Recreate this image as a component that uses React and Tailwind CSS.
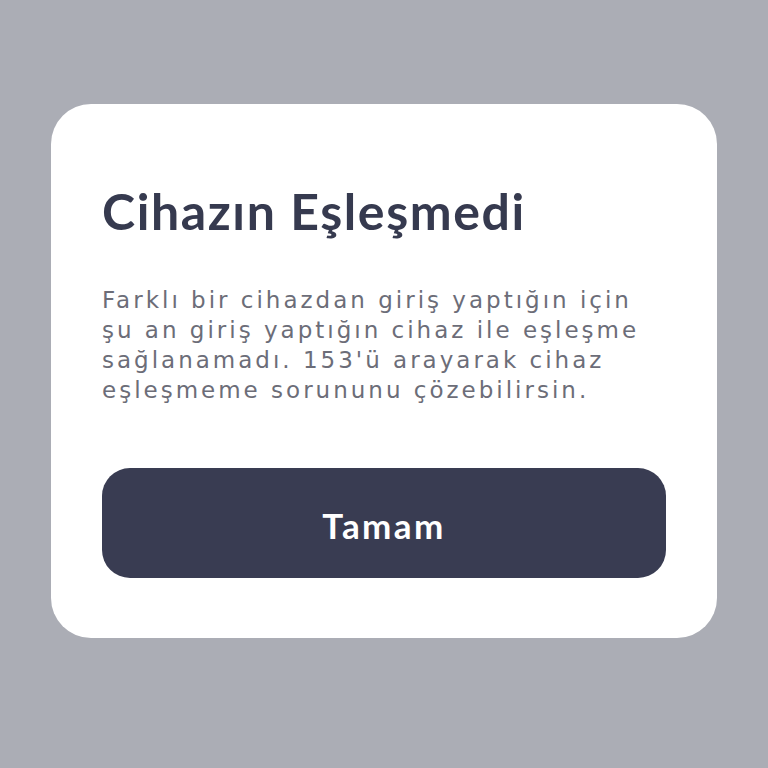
export default function App() {
  return (
    <div className="w-[768px] h-[768px] bg-[#abadb5] flex items-start justify-center pt-[104px]" style={{ fontFamily: '"Lato", "Noto Sans", sans-serif' }}>
      <div className="w-[666px] h-[534px] bg-white rounded-[40px] px-[51px] pt-[79px]">
        <h1 className="text-[50px] leading-[56px] font-bold text-[#363a4f] tracking-[1.6px]">Cihazın Eşleşmedi</h1>
        <p className="mt-[46px] text-[23px] leading-[30px] text-[#6c6d78] tracking-[3px] whitespace-nowrap" style={{ fontFamily: '"DejaVu Sans", sans-serif' }}>
          Farklı bir cihazdan giriş yaptığın için<br />
          şu an giriş yaptığın cihaz ile eşleşme<br />
          sağlanamadı. 153'ü arayarak cihaz<br />
          eşleşmeme sorununu çözebilirsin.
        </p>
        <button className="mt-[63px] w-full h-[110px] rounded-[28px] bg-[#393c52] text-white text-[35px] font-bold tracking-[2.4px] pt-[4px]">Tamam</button>
      </div>
    </div>
  );
}
